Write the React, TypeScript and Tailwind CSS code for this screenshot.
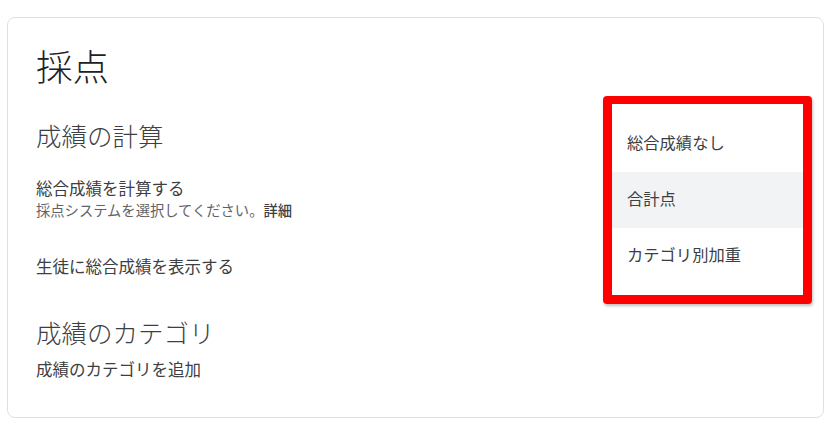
import React from "react";

export default function App() {
  return (
    <div
      className="relative w-[839px] h-[439px] bg-white overflow-hidden"
      style={{ fontFamily: '"Noto Sans CJK JP", "Noto Sans", sans-serif' }}
    >
      <div className="absolute left-[7px] top-[17px] w-[817px] h-[401px] rounded-[8px] border border-[#e0e0e0] bg-white pl-[28px] pt-[26px]">
        <div className="text-[36.5px] leading-[44px] font-light text-[#202124]">採点</div>
        <div className="mt-[31px] text-[25.5px] leading-[32px] font-light text-[#3c4043]">成績の計算</div>
        <div className="mt-[26px] text-[16.5px] leading-[22px] text-[#3c4043]">総合成績を計算する</div>
        <div className="mt-[1px] text-[14.3px] leading-[20px] text-[#5f6368]">
          採点システムを選択してください。<span className="text-[#3c4043] font-medium">詳細</span>
        </div>
        <div className="mt-[35px] text-[16.5px] leading-[22px] text-[#3c4043]">生徒に総合成績を表示する</div>
        <div className="mt-[39px] text-[25.5px] leading-[32px] font-light text-[#3c4043]">成績のカテゴリ</div>
        <div className="mt-[10px] text-[16.5px] leading-[22px] text-[#3c4043]">成績のカテゴリを追加</div>
      </div>

      <div className="absolute left-[603px] top-[96px] w-[209px] h-[208px] rounded-[4px] border-x-[9px] border-t-[8px] border-b-[9px] border-[#ff0000] bg-white shadow-[1px_2px_3px_rgba(0,0,0,0.25)]">
        <div className="pt-[12px] text-[16.3px] text-[#3c4043]">
          <div className="h-[56px] flex items-center pl-[15px] pb-[4px]">総合成績なし</div>
          <div className="h-[56px] flex items-center pl-[15px] pb-[4px] bg-[#f1f3f4]">合計点</div>
          <div className="h-[56px] flex items-center pl-[15px] pb-[4px]">カテゴリ別加重</div>
        </div>
      </div>
    </div>
  );
}
